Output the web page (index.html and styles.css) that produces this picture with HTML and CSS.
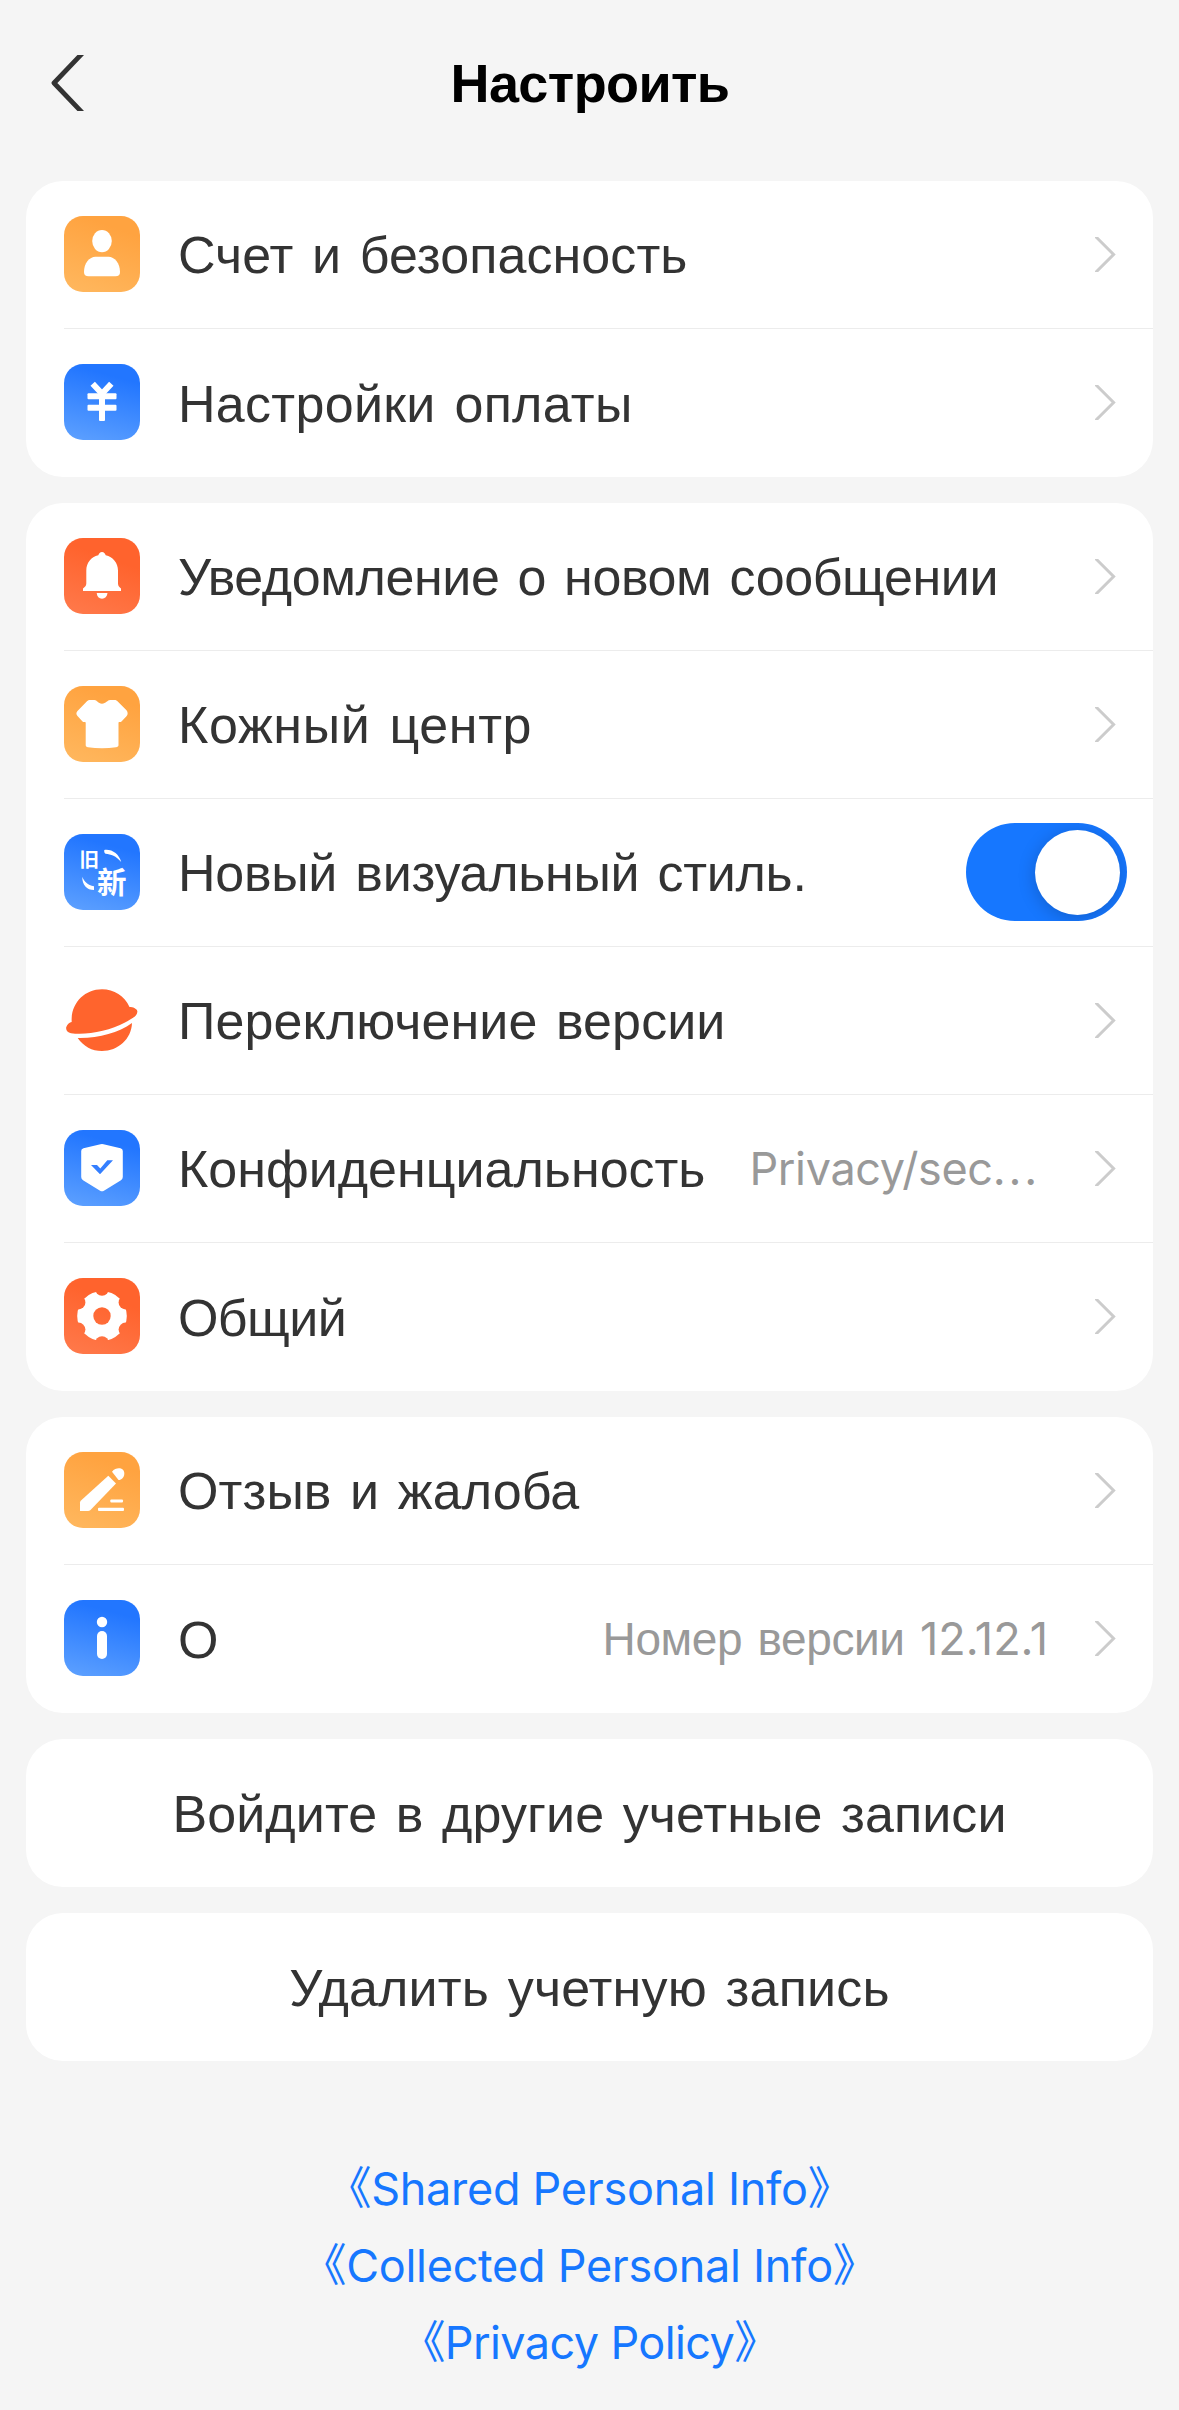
FILE: index.html
```html
<!DOCTYPE html>
<html lang="ru">
<head>
<meta charset="utf-8">
<title>Настроить</title>
<link rel="stylesheet" href="styles.css">
</head>
<body>
<svg class="defs" width="0" height="0" aria-hidden="true">
  <symbol id="chevron" viewBox="0 0 21 35"><path d="M-1 -2 L18.6 17.5 L-1 37" fill="none" stroke="#ccc" stroke-width="3"/></symbol>
</svg>

<header class="header">
  <svg class="back" viewBox="0 0 33 56"><path d="M32.6 -3 L3 28 L32.6 59" fill="none" stroke="#333" stroke-width="4.8" stroke-linejoin="round"/></svg>
  <h1 class="title">Настроить</h1>
</header>

<main class="content">
  <section class="card">
    <div class="row">
      <svg class="icon orange" viewBox="0 0 76 76" fill="#fff"><ellipse cx="38" cy="25.1" rx="9.8" ry="11.2"/><path d="M20 56C20 47 25.500 40.700 31.500 40.700H44.500C50.500 40.700 56 47 56 56C56 59 54.500 60.300 51.500 60.300H24.500C21.500 60.300 20 59 20 56Z"/></svg>
      <span class="label w0">Счет и безопасность</span>
      <svg class="chevron"><use href="#chevron"/></svg>
    </div>
    <div class="row">
      <svg class="icon blue" viewBox="0 0 76 76" fill="#fff"><path d="M28.700 19.700L38 29.700L47.300 19.700" fill="none" stroke="#fff" stroke-width="6"/><rect x="23.500" y="29.300" width="29" height="5.900" rx="1"/><rect x="23.500" y="40.700" width="29" height="6" rx="1"/><rect x="35" y="28" width="6" height="29" rx="1"/></svg>
      <span class="label w2">Настройки оплаты</span>
      <svg class="chevron"><use href="#chevron"/></svg>
    </div>
  </section>

  <section class="card">
    <div class="row">
      <svg class="icon red" viewBox="0 0 76 76" fill="#fff"><path d="M38 14C40 14 41 15.500 41.700 17.300C49 19 54 25 54 32.500V45.500C54 48 55.500 49 57 50.500V53H19V50.500C20.500 49 22.300 48 22.300 45.500V32.500C22.300 25 27 19 34.300 17.300C35 15.500 36 14 38 14Z"/><path d="M32.700 55H43.500C43 58.700 41 60.700 38 60.700S33 58.700 32.700 55Z"/></svg>
      <span class="label t2">Уведомление о новом сообщении</span>
      <svg class="chevron"><use href="#chevron"/></svg>
    </div>
    <div class="row">
      <svg class="icon orange" viewBox="0 0 76 76" fill="#fff"><path d="M26 14H30.500C33 14 34 17.700 38 17.700S43.500 14 46 14H50.500C52 14 53 14.700 54 15.700L62.500 24.300C64 26 64 28.500 62.700 30L57.500 35.500C56.500 36.500 55 35.500 54.500 36.500V59C54.500 60.500 53.500 61 52 61.300C43 62.600 33 62.600 24 61.300C22.500 61 21.700 60.500 21.700 59V36.500C21 35.500 19.500 36.500 18.500 35.500L13.500 30C12 28.500 12 26.500 13.500 25L22.500 15.700C23.500 14.700 24.500 14 26 14Z"/></svg>
      <span class="label w3">Кожный центр</span>
      <svg class="chevron"><use href="#chevron"/></svg>
    </div>
    <div class="row">
      <svg class="icon blue" viewBox="0 0 76 76" fill="#fff"><text class="glyph-old" x="15.500" y="33.300">旧</text><text class="glyph-new" x="33" y="59.400">新</text><path d="M40.300 16C48 15 55 20 57.200 28C52 22 47 20.300 41.500 19.800C40.300 19 40 17.500 40.300 16Z"/><path d="M18.300 42.700C20 47.500 23.500 51 30 52.300V56C23 56 18 51 18.300 42.700Z"/></svg>
      <span class="label t1">Новый визуальный стиль.</span>
      <span class="switch"><span class="knob"></span></span>
    </div>
    <div class="row">
      <svg class="icon" viewBox="0 0 76 76" fill="#ff642d"><path d="M7.700 40C6.500 22 20 7.300 38 7.300C50 7.300 60.500 14 65.500 25C69 25 72.500 26.500 73.300 29C74 34 67 37 61 40.500C45 49 22 53.500 7 51.200C3.500 50.500 1.500 47.500 2.300 45C3.500 42 5.500 40.500 7.700 40Z"/><path d="M13.700 56C34 56.500 54 51 68 41C67.500 57 54 69 38 69C28 69 19.500 64.500 13.700 56Z"/></svg>
      <span class="label w0">Переключение версии</span>
      <svg class="chevron"><use href="#chevron"/></svg>
    </div>
    <div class="row">
      <svg class="icon blue" viewBox="0 0 76 76"><path d="M36.500 14.300Q38 13.800 39.500 14.300L56.500 18.200Q58.800 18.800 58.800 21V47Q58.800 49 57 50.200L39.500 60.900Q38 61.700 36.500 60.900L19 50.200Q17.200 49 17.200 47V21Q17.200 18.800 19.500 18.200Z" fill="#fff"/><path d="M27 35H33L36.300 38.500L43.300 30.300H49L36 44.300Z" fill="#347fff"/></svg>
      <span class="label">Конфиденциальность</span>
      <span class="detail detail-privacy">Privacy/sec<span class="dots">...</span></span>
      <svg class="chevron"><use href="#chevron"/></svg>
    </div>
    <div class="row">
      <svg class="icon red" viewBox="0 0 76 76"><mask id="gear"><circle cx="38" cy="38" r="24.800" fill="#fff"/><g fill="#000"><circle cx="38" cy="38" r="8.700"/><circle cx="38" cy="10.800" r="7"/><circle cx="38" cy="65.200" r="7"/><circle cx="61.600" cy="24.400" r="7"/><circle cx="61.600" cy="51.600" r="7"/><circle cx="14.400" cy="24.400" r="7"/><circle cx="14.400" cy="51.600" r="7"/></g></mask><rect width="76" height="76" fill="#fff" mask="url(#gear)"/></svg>
      <span class="label t3">Общий</span>
      <svg class="chevron"><use href="#chevron"/></svg>
    </div>
  </section>

  <section class="card">
    <div class="row">
      <svg class="icon orange" viewBox="0 0 76 76" fill="#fff"><path d="M44.300 23.700L52 31.500L26.500 58Q25.500 59 24 59H16V50.500Q16 49.500 17 48.500Z"/><path d="M48 19.700C52.500 14.500 60.300 15.500 60.300 21.700C60.300 25 57.500 28 54.500 28Z"/><rect x="46.300" y="47.500" width="12.700" height="3" rx="1"/><rect x="34" y="55.700" width="26" height="3.300" rx="1"/></svg>
      <span class="label w0">Отзыв и жалоба</span>
      <svg class="chevron"><use href="#chevron"/></svg>
    </div>
    <div class="row">
      <svg class="icon blue" viewBox="0 0 76 76" fill="#fff"><circle cx="38" cy="22" r="5.200"/><rect x="33" y="31" width="10" height="28" rx="5"/></svg>
      <span class="label">О</span>
      <span class="detail detail-version">Номер версии <span class="number">12.12.1</span></span>
      <svg class="chevron"><use href="#chevron"/></svg>
    </div>
  </section>

  <button class="card action w0">Войдите в другие учетные записи</button>
  <button class="card action w1">Удалить учетную запись</button>
</main>

<footer class="links">
  <a class="link t1">《Shared Personal Info》</a>
  <a class="link t1">《Collected Personal Info》</a>
  <a class="link t3">《Privacy Policy》</a>
</footer>
</body>
</html>
```
FILE: styles.css
```css
* { box-sizing: border-box; }
body {
  margin: 0;
  background: #f5f5f5;
  color: #333;
  font-family: "Liberation Sans", Arial, sans-serif;
}
.defs { display: block; }

.header {
  display: grid;
  grid-template-columns: 33px 1fr 33px;
  align-items: center;
  height: 166px;
  padding: 0 51px;
}
.back { width: 33px; height: 56px; }
.title {
  margin: 0;
  padding-left: 1px;
  text-align: center;
  font-size: 54px;
  line-height: 78px;
  font-weight: 700;
  letter-spacing: -0.6px;
  color: #000;
}

.content {
  display: flex;
  flex-direction: column;
  gap: 26px;
  margin-top: 15px;
  padding: 0 26px;
}
.card {
  background: #fff;
  border-radius: 37px;
}
.row {
  display: flex;
  align-items: flex-start;
  height: 148px;
  margin-left: 38px;
  padding: 35px 37px 0 0;
  border-bottom: 1px solid #ececec;
}
.row:last-child { border-bottom: 0; }
.row:last-child .label { line-height: 80px; }

.icon {
  flex: none;
  width: 76px;
  height: 76px;
  border-radius: 19px;
}
.orange { background: linear-gradient(200deg, #ffa340 20%, #ffb85f); }
.blue { background: linear-gradient(195deg, #2276ff 20%, #5ea1ff); }
.red { background: linear-gradient(200deg, #ff632d 30%, #ff7a4c); }

.label {
  flex: 1;
  margin-left: 38px;
  font-size: 52px;
  line-height: 78px;
  word-spacing: 4px;
  white-space: nowrap;
}

/* Tracking steps: t = tighter, w = wider */
.t1 { letter-spacing: -0.28px; }
.t2 { letter-spacing: -0.4px; }
.t3 { letter-spacing: -0.6px; }
.w0 { letter-spacing: 0.09px; }
.w1 { letter-spacing: 0.19px; }
.w2 { letter-spacing: 0.3px; }
.w3 { letter-spacing: 0.63px; }

.detail {
  flex: none;
  color: #999;
  line-height: 78px;
  white-space: nowrap;
}
.detail-privacy {
  margin-right: 55px;
  font-family: Inter, sans-serif;
  font-size: 45px;
  letter-spacing: -0.35px;
}
.dots { letter-spacing: 2.8px; }
.detail-version {
  margin-right: 47px;
  font-size: 46px;
  letter-spacing: -0.4px;
  word-spacing: 3px;
}
.number {
  font-family: Inter, sans-serif;
  font-size: 45px;
  letter-spacing: 0;
}

.chevron {
  flex: none;
  width: 21px;
  height: 35px;
  margin-top: 21px;
}

.switch {
  display: flex;
  justify-content: flex-end;
  width: 161px;
  height: 98px;
  margin: -11px -11px 0 0;
  padding: 7px;
  border-radius: 49px;
  background: #1677ff;
  overflow: hidden;
}
.knob {
  width: 85px;
  height: 85px;
  border-radius: 50%;
  background: #fff;
  box-shadow: 0 3px 18px rgba(0, 0, 0, 0.2);
}

.glyph-old { font: 700 19.500px "Noto Sans CJK SC", sans-serif; }
.glyph-new { font: 700 29.500px "Noto Sans CJK SC", sans-serif; }

.action {
  display: block;
  height: 148px;
  border: 0;
  padding: 2px 0 0;
  color: inherit;
  font-family: inherit;
  font-size: 52px;
  line-height: 146px;
  word-spacing: 4px;
  text-align: center;
}

.links {
  display: flex;
  flex-direction: column;
  align-items: center;
  margin-top: 89px;
}
.link {
  color: #1677ff;
  font-family: Inter, "Noto Sans CJK SC", sans-serif;
  font-size: 45px;
  line-height: 77px;
}
```
